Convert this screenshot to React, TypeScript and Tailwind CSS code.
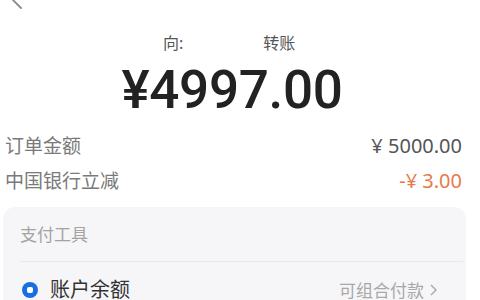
import React from "react";

export default function App() {
  return (
    <div
      className="w-[480px] h-[300px] overflow-hidden bg-white relative"
      style={{ fontFamily: '"Noto Sans", "Noto Sans CJK SC", sans-serif' }}
    >
      <svg className="absolute left-[9px] top-[-10px]" width="16" height="20" viewBox="0 0 16 20">
        <path d="M12 2 L4 10 L12 18" stroke="#8a8a8a" strokeWidth="1.8" fill="none" strokeLinecap="round" />
      </svg>
      <div className="flex items-center h-[20px] mt-[33px] text-[16px] text-[#555] leading-none">
        <span className="ml-[163px]">向:</span>
        <span className="ml-[80px]">转账</span>
      </div>
      <div className="flex justify-center mt-[8px] h-[58px] items-center pr-[16px]">
        <span
          className="text-[53px] font-medium text-[#222] leading-none tracking-[-0.3px]"
          style={{ fontFamily: 'Roboto, "Noto Sans", sans-serif' }}
        >
          ¥4997.00
        </span>
      </div>
      <div className="flex justify-between items-center pl-[5px] pr-[18px] mt-[15px] h-[24px] text-[19px] leading-none">
        <span className="text-[#7a7a7a]">订单金额</span>
        <span className="text-[#555] text-[20px]">¥ 5000.00</span>
      </div>
      <div className="flex justify-between items-center pl-[5px] pr-[18px] mt-[11px] h-[24px] text-[19px] leading-none">
        <span className="text-[#7a7a7a]">中国银行立减</span>
        <span className="text-[#e8794c] text-[20px]">-¥ 3.00</span>
      </div>
      <div className="mt-[14px] ml-[3px] w-[463px] h-[120px] bg-[#f6f6f8] rounded-[12px]">
        <div className="ml-[17px] mr-[3px] h-[55px] border-b border-[#e8e8ea] flex items-center">
          <span className="text-[17px] text-[#a3a3a3] leading-none">支付工具</span>
        </div>
        <div className="flex items-center justify-between pl-[19px] pr-[28px] h-[56px]">
          <div className="flex items-center">
            <span className="w-[16px] h-[16px] rounded-full bg-[#1a6fe0] flex items-center justify-center">
              <span className="w-[6px] h-[6px] rounded-[2px] bg-white" />
            </span>
            <span className="ml-[12px] text-[20px] text-[#333] leading-none">账户余额</span>
          </div>
          <div className="flex items-center text-[17px] text-[#a8a8a8] leading-none">
            <span>可组合付款</span>
            <svg className="ml-[4px]" width="10" height="14" viewBox="0 0 10 14">
              <path d="M3 2 L8 7 L3 12" stroke="#a8a8a8" strokeWidth="1.4" fill="none" />
            </svg>
          </div>
        </div>
      </div>
    </div>
  );
}
